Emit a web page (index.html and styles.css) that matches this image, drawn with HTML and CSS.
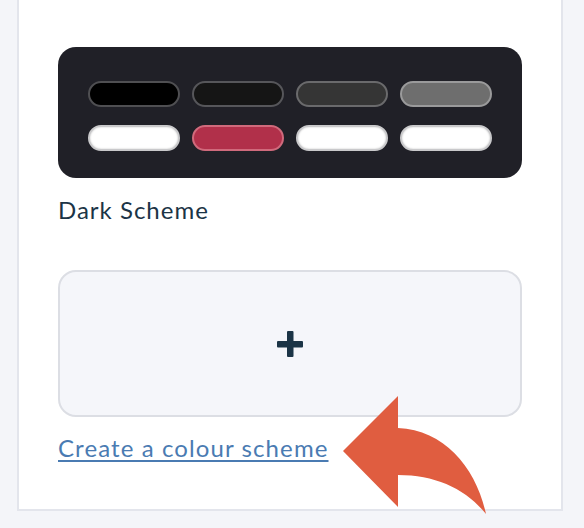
FILE: index.html
```html
<!DOCTYPE html>
<html lang="en">
<head>
    <meta charset="UTF-8">
    <meta name="viewport" content="width=device-width, initial-scale=1.0">
    <title>Colour Schemes</title>
    <link rel="stylesheet" href="styles.css">
</head>
<body>
    <div class="panel">
        <div class="scheme">
            <div class="scheme-card">
                <div class="swatch swatch-black"></div>
                <div class="swatch swatch-near-black"></div>
                <div class="swatch swatch-dark-grey"></div>
                <div class="swatch swatch-grey"></div>
                <div class="swatch swatch-white"></div>
                <div class="swatch swatch-red"></div>
                <div class="swatch swatch-white"></div>
                <div class="swatch swatch-white"></div>
            </div>
            <div class="scheme-name">Dark Scheme</div>
        </div>
        <div class="add-scheme">
            <svg class="plus" width="26" height="26" viewBox="0 0 26 26">
                <rect x="0" y="10" width="26" height="6.5" rx="1" fill="#1b3446"/>
                <rect x="10" y="0" width="6.5" height="26" rx="1" fill="#1b3446"/>
            </svg>
        </div>
        <a class="create-link" href="#">Create a colour scheme</a>
    </div>
    <!-- pointer arrow drawn over the panel -->
    <svg class="pointer" width="584" height="528" viewBox="0 0 584 528">
        <path d="M343 451 L398 396 L398 428 C445 430 476 468 486 514 C466 489 436 475 398 475 L398 507 Z" fill="#e05d40"/>
    </svg>
</body>
</html>
```

FILE: styles.css
```css
body {
    margin: 0;
    background-color: #f4f5f9;
    font-family: Lato, "Open Sans", sans-serif;
    position: relative;
    height: 528px;
    overflow: hidden;
}
.panel {
    margin: 0 21px 0 17px;
    background-color: #ffffff;
    border: 2px solid #e3e5ec;
    border-top: none;
    padding: 47px 39px 46px 39px;
}
.scheme-card {
    background-color: #202027;
    border-radius: 18px;
    padding: 34px 30px 27px 30px;
    display: grid;
    grid-template-columns: repeat(4, 1fr);
    column-gap: 12px;
    row-gap: 18px;
}
.swatch {
    height: 26px;
    border-radius: 13px;
    box-sizing: border-box;
    border: 2px solid #555;
}
.swatch-black {
    background-color: #000000;
    border-color: #4f4f52;
}
.swatch-near-black {
    background-color: #151515;
    border-color: #56565a;
}
.swatch-dark-grey {
    background-color: #353535;
    border-color: #6a6a6c;
}
.swatch-grey {
    background-color: #6e6e6e;
    border-color: #9a9a9b;
}
.swatch-white {
    background-color: #ffffff;
    border-color: #c9c9cb;
    box-shadow: inset 0 0 2px rgba(0, 0, 0, 0.25);
}
.swatch-red {
    background-color: #b1304a;
    border-color: #d06a7c;
}
.scheme-name {
    font-size: 24px;
    line-height: 30px;
    letter-spacing: 1px;
    color: #1b3446;
    margin-top: 17px;
}
.add-scheme {
    margin-top: 45px;
    height: 143px;
    background-color: #f5f6fa;
    border: 2px solid #dcdee4;
    border-radius: 18px;
    display: flex;
    justify-content: center;
    align-items: center;
}
.create-link {
    display: inline-block;
    margin-top: 16px;
    font-size: 24px;
    line-height: 30px;
    letter-spacing: 1.1px;
    color: #4a7bb2;
    text-decoration: underline;
    text-decoration-thickness: 1.5px;
    text-underline-offset: 3px;
}
.pointer {
    position: absolute;
    top: 0;
    left: 0;
    pointer-events: none;
}
```
